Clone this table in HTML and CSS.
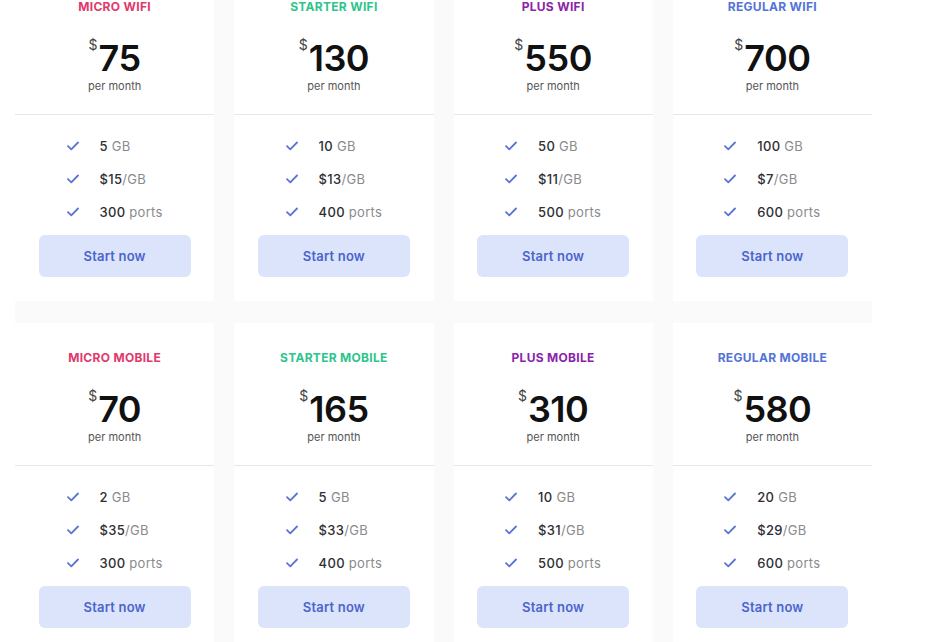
FILE: index.html
```html
<!DOCTYPE html>
<html lang="en">
<head>
<meta charset="utf-8">
<title>Pricing</title>
<link rel="stylesheet" href="styles.css">
</head>
<body>
<main class="plans">
  <section class="card">
    <header class="card-head">
      <h2 class="plan-name pink">MICRO WIFI</h2>
      <div class="price"><span class="cur">$</span><span class="amt">75</span></div>
      <div class="period">per month</div>
    </header>
    <div class="card-body">
      <ul class="features">
        <li><svg class="check" viewBox="0 0 12 10"><path d="M1 5.2 4.3 8.3 11 1.5"/></svg><span><b>5</b> GB</span></li>
        <li><svg class="check" viewBox="0 0 12 10"><path d="M1 5.2 4.3 8.3 11 1.5"/></svg><span><b>$15</b>/GB</span></li>
        <li><svg class="check" viewBox="0 0 12 10"><path d="M1 5.2 4.3 8.3 11 1.5"/></svg><span><b>300</b> ports</span></li>
      </ul>
      <button class="btn">Start now</button>
    </div>
  </section>
  <section class="card">
    <header class="card-head">
      <h2 class="plan-name green">STARTER WIFI</h2>
      <div class="price"><span class="cur">$</span><span class="amt">130</span></div>
      <div class="period">per month</div>
    </header>
    <div class="card-body">
      <ul class="features">
        <li><svg class="check" viewBox="0 0 12 10"><path d="M1 5.2 4.3 8.3 11 1.5"/></svg><span><b>10</b> GB</span></li>
        <li><svg class="check" viewBox="0 0 12 10"><path d="M1 5.2 4.3 8.3 11 1.5"/></svg><span><b>$13</b>/GB</span></li>
        <li><svg class="check" viewBox="0 0 12 10"><path d="M1 5.2 4.3 8.3 11 1.5"/></svg><span><b>400</b> ports</span></li>
      </ul>
      <button class="btn">Start now</button>
    </div>
  </section>
  <section class="card">
    <header class="card-head">
      <h2 class="plan-name purple">PLUS WIFI</h2>
      <div class="price"><span class="cur">$</span><span class="amt">550</span></div>
      <div class="period">per month</div>
    </header>
    <div class="card-body">
      <ul class="features">
        <li><svg class="check" viewBox="0 0 12 10"><path d="M1 5.2 4.3 8.3 11 1.5"/></svg><span><b>50</b> GB</span></li>
        <li><svg class="check" viewBox="0 0 12 10"><path d="M1 5.2 4.3 8.3 11 1.5"/></svg><span><b>$11</b>/GB</span></li>
        <li><svg class="check" viewBox="0 0 12 10"><path d="M1 5.2 4.3 8.3 11 1.5"/></svg><span><b>500</b> ports</span></li>
      </ul>
      <button class="btn">Start now</button>
    </div>
  </section>
  <section class="card">
    <header class="card-head">
      <h2 class="plan-name blue">REGULAR WIFI</h2>
      <div class="price"><span class="cur">$</span><span class="amt">700</span></div>
      <div class="period">per month</div>
    </header>
    <div class="card-body">
      <ul class="features">
        <li><svg class="check" viewBox="0 0 12 10"><path d="M1 5.2 4.3 8.3 11 1.5"/></svg><span><b>100</b> GB</span></li>
        <li><svg class="check" viewBox="0 0 12 10"><path d="M1 5.2 4.3 8.3 11 1.5"/></svg><span><b>$7</b>/GB</span></li>
        <li><svg class="check" viewBox="0 0 12 10"><path d="M1 5.2 4.3 8.3 11 1.5"/></svg><span><b>600</b> ports</span></li>
      </ul>
      <button class="btn">Start now</button>
    </div>
  </section>

  <section class="card">
    <header class="card-head">
      <h2 class="plan-name pink">MICRO MOBILE</h2>
      <div class="price"><span class="cur">$</span><span class="amt">70</span></div>
      <div class="period">per month</div>
    </header>
    <div class="card-body">
      <ul class="features">
        <li><svg class="check" viewBox="0 0 12 10"><path d="M1 5.2 4.3 8.3 11 1.5"/></svg><span><b>2</b> GB</span></li>
        <li><svg class="check" viewBox="0 0 12 10"><path d="M1 5.2 4.3 8.3 11 1.5"/></svg><span><b>$35</b>/GB</span></li>
        <li><svg class="check" viewBox="0 0 12 10"><path d="M1 5.2 4.3 8.3 11 1.5"/></svg><span><b>300</b> ports</span></li>
      </ul>
      <button class="btn">Start now</button>
    </div>
  </section>
  <section class="card">
    <header class="card-head">
      <h2 class="plan-name green">STARTER MOBILE</h2>
      <div class="price"><span class="cur">$</span><span class="amt">165</span></div>
      <div class="period">per month</div>
    </header>
    <div class="card-body">
      <ul class="features">
        <li><svg class="check" viewBox="0 0 12 10"><path d="M1 5.2 4.3 8.3 11 1.5"/></svg><span><b>5</b> GB</span></li>
        <li><svg class="check" viewBox="0 0 12 10"><path d="M1 5.2 4.3 8.3 11 1.5"/></svg><span><b>$33</b>/GB</span></li>
        <li><svg class="check" viewBox="0 0 12 10"><path d="M1 5.2 4.3 8.3 11 1.5"/></svg><span><b>400</b> ports</span></li>
      </ul>
      <button class="btn">Start now</button>
    </div>
  </section>
  <section class="card">
    <header class="card-head">
      <h2 class="plan-name purple">PLUS MOBILE</h2>
      <div class="price"><span class="cur">$</span><span class="amt">310</span></div>
      <div class="period">per month</div>
    </header>
    <div class="card-body">
      <ul class="features">
        <li><svg class="check" viewBox="0 0 12 10"><path d="M1 5.2 4.3 8.3 11 1.5"/></svg><span><b>10</b> GB</span></li>
        <li><svg class="check" viewBox="0 0 12 10"><path d="M1 5.2 4.3 8.3 11 1.5"/></svg><span><b>$31</b>/GB</span></li>
        <li><svg class="check" viewBox="0 0 12 10"><path d="M1 5.2 4.3 8.3 11 1.5"/></svg><span><b>500</b> ports</span></li>
      </ul>
      <button class="btn">Start now</button>
    </div>
  </section>
  <section class="card">
    <header class="card-head">
      <h2 class="plan-name blue">REGULAR MOBILE</h2>
      <div class="price"><span class="cur">$</span><span class="amt">580</span></div>
      <div class="period">per month</div>
    </header>
    <div class="card-body">
      <ul class="features">
        <li><svg class="check" viewBox="0 0 12 10"><path d="M1 5.2 4.3 8.3 11 1.5"/></svg><span><b>20</b> GB</span></li>
        <li><svg class="check" viewBox="0 0 12 10"><path d="M1 5.2 4.3 8.3 11 1.5"/></svg><span><b>$29</b>/GB</span></li>
        <li><svg class="check" viewBox="0 0 12 10"><path d="M1 5.2 4.3 8.3 11 1.5"/></svg><span><b>600</b> ports</span></li>
      </ul>
      <button class="btn">Start now</button>
    </div>
  </section>
</main>
</body>
</html>
```

FILE: styles.css
```css
* { box-sizing: border-box; }

html, body {
  margin: 0;
  padding: 0;
  background: #ffffff;
  font-family: Inter, "Noto Sans", "Liberation Sans", sans-serif;
  overflow: hidden;
}

.plans {
  display: grid;
  grid-template-columns: repeat(4, 1fr);
  column-gap: 20px;
  row-gap: 22px;
  width: 857px;
  margin: -28px 0 0 15px;
  background: #fafafb;
}

.card {
  background: #ffffff;
  height: 329px;
  display: flex;
  flex-direction: column;
}

.card-head {
  display: flex;
  flex-direction: column;
  align-items: center;
  padding: 27px 0 21px;
  border-bottom: 1px solid #e7e7ea;
}

.plan-name {
  margin: 0;
  font-size: 12px;
  line-height: 16px;
  font-weight: 700;
  letter-spacing: 0.3px;
}

.pink { color: #e2386c; }
.green { color: #2ec48c; }
.purple { color: #8b24a8; }
.blue { color: #5473d8; }

.price {
  display: flex;
  align-items: flex-start;
  margin-top: 23px;
  height: 40px;
}

.cur {
  font-size: 14px;
  line-height: 14px;
  color: #444;
  margin: 0 1px 0 0;
}

.amt {
  font-size: 36px;
  line-height: 40px;
  font-weight: 600;
  color: #111;
  letter-spacing: -0.5px;
}

.period {
  margin-top: 1px;
  font-size: 11px;
  line-height: 14px;
  color: #555;
}

.card-body {
  display: flex;
  flex-direction: column;
  align-items: center;
  padding: 21px 0 23px;
}

.features {
  list-style: none;
  margin: 0;
  padding: 0;
  display: flex;
  flex-direction: column;
  gap: 13px;
}

.features li {
  display: flex;
  align-items: center;
  gap: 21px;
  font-size: 13px;
  line-height: 20px;
  color: #8a8a8e;
  letter-spacing: 0.3px;
}

.features b {
  font-weight: 500;
  color: #2e2e33;
}

.check {
  width: 12px;
  height: 10px;
  fill: none;
  stroke: #5a74d6;
  stroke-width: 1.8;
  stroke-linecap: round;
  stroke-linejoin: round;
}

.btn {
  margin-top: 13px;
  width: 152px;
  height: 42px;
  border: 0;
  border-radius: 6px;
  background: #dce4fb;
  color: #4a64cc;
  font-family: inherit;
  font-size: 13px;
  font-weight: 600;
  letter-spacing: 0.2px;
}
```
